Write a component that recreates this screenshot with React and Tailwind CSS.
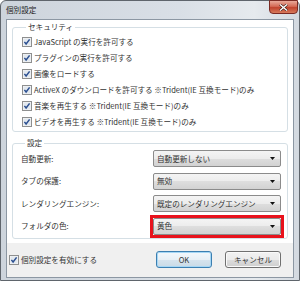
import React from "react";

function Check() {
  return (
    <svg width="10" height="10" viewBox="0 0 10 10" className="shrink-0">
      <rect x="0.5" y="0.5" width="9" height="9" fill="#f7f7f7" stroke="#8e8f8f" />
      <rect x="1.5" y="1.5" width="7" height="7" fill="#e2e8ee" />
      <path d="M2.4 4.9 L4.1 7 L7.6 2.4" fill="none" stroke="#2b4f90" strokeWidth="1.5" />
    </svg>
  );
}

function Arrow() {
  return (
    <svg width="5" height="3" viewBox="0 0 5 3" className="shrink-0">
      <path d="M0 0 H5 L2.5 3 Z" fill="#111" />
    </svg>
  );
}

function Select({ value }) {
  return (
    <div className="flex h-[17px] w-[128px] items-center justify-between rounded-[2px] border border-[#8b8b8b] bg-[linear-gradient(to_bottom,#f4f4f4_0%,#ececec_50%,#dedede_50%,#d2d2d2_100%)] pl-[3px] pr-[5px]">
      <span>{value}</span>
      <Arrow />
    </div>
  );
}

const checks = [
  "JavaScript の実行を許可する",
  "プラグインの実行を許可する",
  "画像をロードする",
  "ActiveX のダウンロードを許可する ※Trident(IE 互換モード)のみ",
  "音楽を再生する ※Trident(IE 互換モード)のみ",
  "ビデオを再生する ※Trident(IE 互換モード)のみ",
];

export default function App() {
  return (
    <div className="h-[281px] w-[300px] font-['Noto_Sans_CJK_JP',sans-serif] text-[7.6px] leading-none text-[#333333]">
      <div className="flex h-[281px] w-[300px] flex-col rounded-t-[6px] border border-[#5f656c] bg-[linear-gradient(to_right,#cdd4dc_0%,#d9dfe6_60%,#e6eaee_85%,#d3d9e0_100%)] px-[5px] pb-[2px]">
        <div className="flex h-[18px] items-start justify-between">
          <span className="mt-[4px] text-[7.6px] leading-[10px] text-[#222222]">個別設定</span>
          <div className="-mr-[4px] -mt-[1px] flex h-[14px] w-[29px] items-center justify-center rounded-b-[4px] border border-[#7a2a24] bg-[linear-gradient(to_bottom,#e9a99a_0%,#d46a56_45%,#c0432e_55%,#d77a5c_100%)]">
            <svg width="9" height="7" viewBox="0 0 9 7">
              <path d="M1 0.5 L8 6.5 M8 0.5 L1 6.5" stroke="#3a1a16" strokeWidth="2.6" />
              <path d="M1 0.5 L8 6.5 M8 0.5 L1 6.5" stroke="#ffffff" strokeWidth="1.4" />
            </svg>
          </div>
        </div>
        <div className="flex flex-1 flex-col border border-[#8c97a3]">
          <div className="flex flex-col bg-white px-[5px] pb-[4px] pt-[2px]">
            <fieldset className="rounded-[3px] border border-[#d5dfe5] pb-[1px] pl-[9px]">
              <legend className="ml-[4px] px-[2px] leading-[10px]">セキュリティ</legend>
              <div className="flex flex-col pt-[2px]">
                {checks.map((t) => (
                  <div key={t} className="flex h-[16px] items-center gap-[2px]">
                    <Check />
                    <span>{t}</span>
                  </div>
                ))}
              </div>
            </fieldset>
            <fieldset className="mt-[6px] rounded-[3px] border border-[#d5dfe5] pb-[3px] pl-[8px]">
              <legend className="ml-[4px] px-[2px] leading-[10px]">設定</legend>
              <div className="flex flex-col gap-[5.5px] pt-[2px]">
                <div className="flex h-[17px] items-center">
                  <span className="w-[132px]">自動更新:</span>
                  <Select value="自動更新しない" />
                </div>
                <div className="flex h-[17px] items-center">
                  <span className="w-[132px]">タブの保護:</span>
                  <Select value="無効" />
                </div>
                <div className="flex h-[17px] items-center">
                  <span className="w-[132px]">レンダリングエンジン:</span>
                  <Select value="既定のレンダリングエンジン" />
                </div>
                <div className="flex h-[17px] items-center">
                  <span className="w-[129px]">フォルダの色:</span>
                  <div className="border-[3px] border-[#e8121c]">
                    <Select value="黄色" />
                  </div>
                </div>
              </div>
            </fieldset>
          </div>
          <div className="flex flex-1 items-center justify-between bg-[#f0f0f0] pl-[2px] pr-[12px]">
            <div className="flex items-center gap-[2px]">
              <Check />
              <span>個別設定を有効にする</span>
            </div>
            <div className="flex items-center gap-[13px]">
              <div className="flex h-[17px] w-[56px] items-center justify-center rounded-[3px] border border-[#3c7fb1] bg-[linear-gradient(to_bottom,#f3f8fc_0%,#e8f0f6_50%,#d7e4ee_50%,#cadae6_100%)] shadow-[inset_0_0_0_1px_#a6d7f5]">
                OK
              </div>
              <div className="flex h-[17px] w-[56px] items-center justify-center rounded-[3px] border border-[#707070] bg-[linear-gradient(to_bottom,#f2f2f2_0%,#ebebeb_50%,#dddddd_50%,#cfcfcf_100%)] shadow-[inset_0_0_0_1px_#fafafa]">
                キャンセル
              </div>
            </div>
          </div>
        </div>
      </div>
    </div>
  );
}
